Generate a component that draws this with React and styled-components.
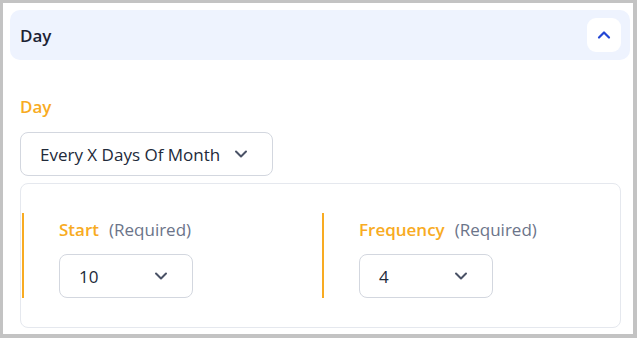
import styled, { createGlobalStyle } from "styled-components";

const GlobalStyle = createGlobalStyle`
  html, body {
    margin: 0;
    padding: 0;
    background: #c3c3c3;
  }
  body {
    font-family: "Open Sans", "Noto Sans", sans-serif;
  }
`;

const Frame = styled.div`
  box-sizing: border-box;
  margin: 3px 0 0 3px;
  width: 630px;
  height: 331px;
  background: #fff;
  padding: 7px 3px 0 7px;
  overflow: hidden;
`;

const SectionHeader = styled.div`
  display: flex;
  align-items: center;
  justify-content: space-between;
  height: 50px;
  padding: 0 9px 0 10px;
  background: #eef3fe;
  border-radius: 10px;
  box-sizing: border-box;
`;

const HeaderTitle = styled.h2`
  margin: 0;
  font-size: 17px;
  font-weight: 600;
  color: #1c2233;
`;

const IconButton = styled.button`
  display: flex;
  align-items: center;
  justify-content: center;
  width: 34px;
  height: 34px;
  padding: 0;
  border: none;
  border-radius: 9px;
  background: #fff;
  color: #2346d4;
  cursor: pointer;
`;

const Body = styled.div`
  padding: 35px 10px 0 10px;
`;

const Label = styled.span`
  font-size: 17px;
  font-weight: 600;
  color: #f8ab22;
  line-height: 24px;
`;

const Hint = styled.span`
  font-size: 17px;
  font-weight: 400;
  color: #6b7489;
  margin-left: 10px;
  line-height: 24px;
`;

const Select = styled.div`
  box-sizing: border-box;
  display: flex;
  align-items: center;
  justify-content: space-between;
  gap: 14px;
  height: 44px;
  width: ${(p) => (p.$width ? `${p.$width}px` : "auto")};
  align-self: flex-start;
  padding: 0 24px 0 19px;
  border: 1px solid #d3d7df;
  border-radius: 8px;
  background: #fff;
  font-size: 17px;
  color: #222a3a;
`;

const Field = styled.div`
  display: flex;
  flex-direction: column;
  align-items: flex-start;
  gap: 13px;
`;

const Card = styled.div`
  box-sizing: border-box;
  display: grid;
  grid-template-columns: 300px 300px;
  margin-top: 7px;
  width: 601px;
  padding: 29px 0;
  border: 1px solid #e5e8ee;
  border-radius: 8px;
`;

const Column = styled.div`
  display: flex;
  flex-direction: column;
  gap: 12px;
  padding: 5px 0 0 35px;
  margin-left: 1px;
  border-left: 2px solid #f8ab22;
`;

function Chevron({ up, size = 14, color = "#4a5266", width = 2 }) {
  return (
    <svg width={size} height={size} viewBox="0 0 14 14" fill="none">
      <path
        d={up ? "M2 9.5 L7 4.5 L12 9.5" : "M2 4.5 L7 9.5 L12 4.5"}
        stroke={color}
        strokeWidth={width}
        strokeLinecap="round"
        strokeLinejoin="round"
      />
    </svg>
  );
}

function SubField({ label, value }) {
  return (
    <Column>
      <div>
        <Label>{label}</Label>
        <Hint>(Required)</Hint>
      </div>
      <Select $width={134}>
        <span>{value}</span>
        <Chevron />
      </Select>
    </Column>
  );
}

export default function App() {
  return (
    <>
      <GlobalStyle />
      <Frame>
        <SectionHeader>
          <HeaderTitle>Day</HeaderTitle>
          <IconButton aria-label="Collapse">
            <Chevron up size={14} color="#2346d4" width={2.2} />
          </IconButton>
        </SectionHeader>
        <Body>
          <Field>
            <Label>Day</Label>
            <Select>
              <span>Every X Days Of Month</span>
              <Chevron />
            </Select>
          </Field>
          <Card>
            <SubField label="Start" value="10" />
            <SubField label="Frequency" value="4" />
          </Card>
        </Body>
      </Frame>
    </>
  );
}
